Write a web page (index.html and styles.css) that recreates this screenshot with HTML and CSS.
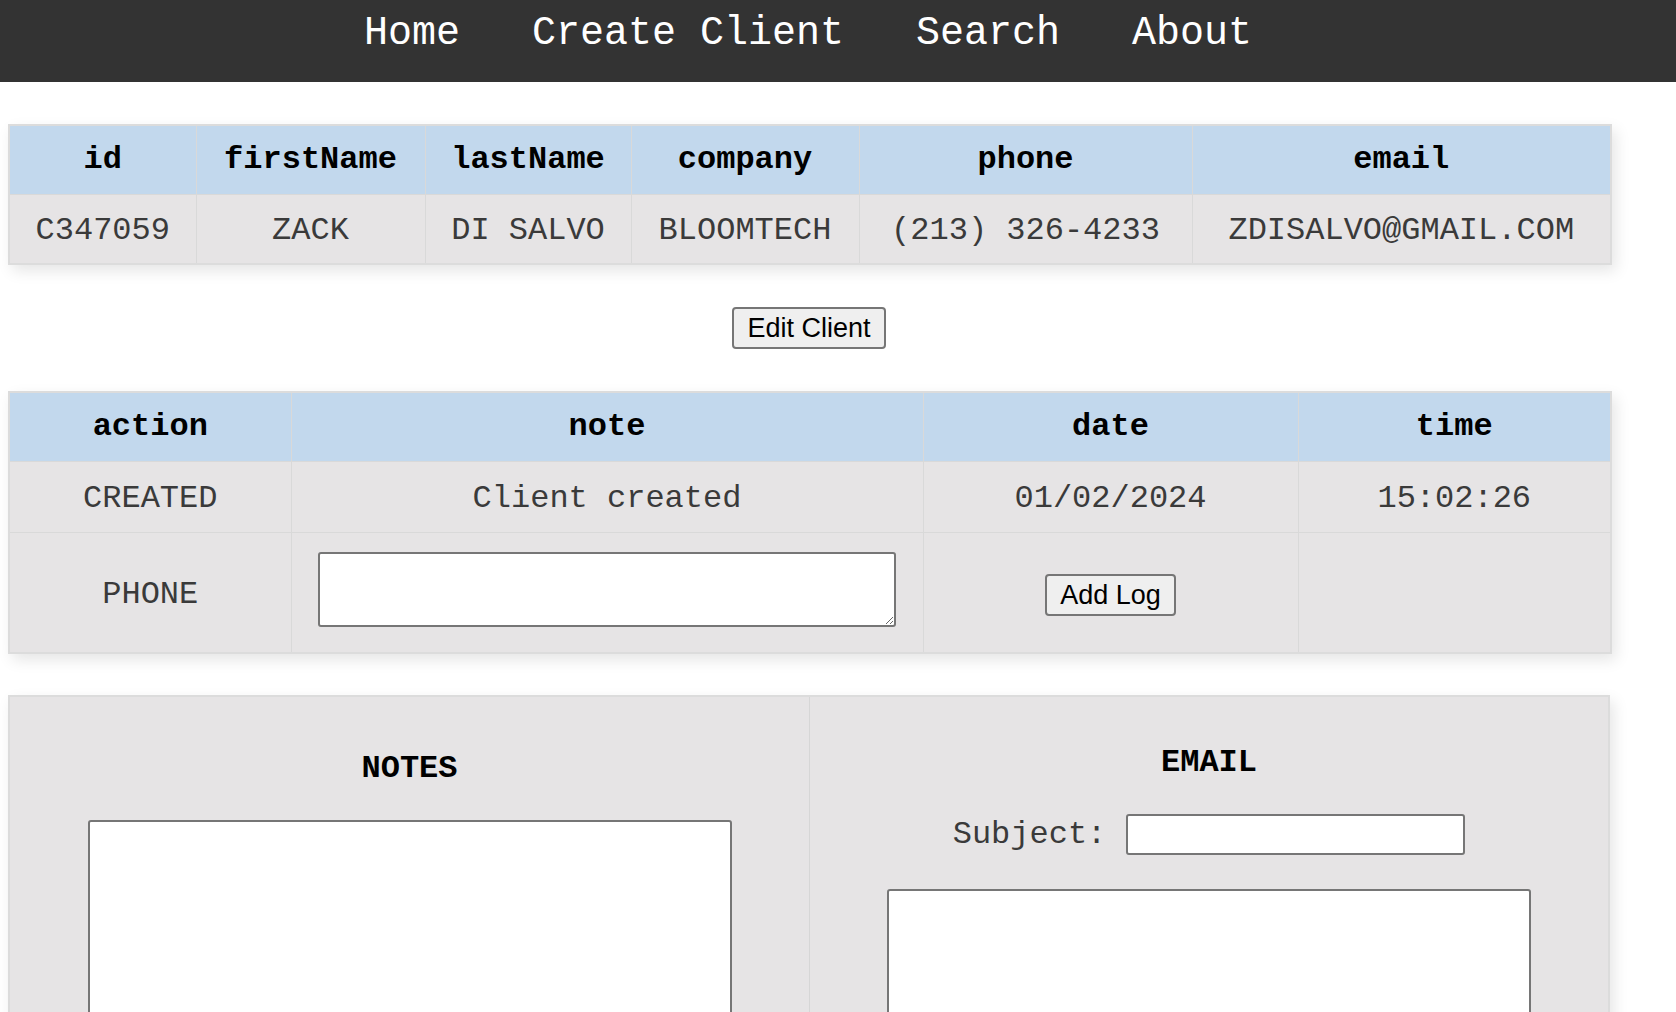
FILE: index.html
```html
<!DOCTYPE html>
<html lang="en">
<head>
<meta charset="utf-8">
<title>Client</title>
<link rel="stylesheet" href="styles.css">
</head>
<body>
<nav class="topnav">
  <a href="#">Home</a>
  <a href="#">Create Client</a>
  <a href="#">Search</a>
  <a href="#">About</a>
</nav>
<main class="content">
  <table class="grid">
    <colgroup>
      <col class="c-id"><col class="c-first"><col class="c-last"><col class="c-company"><col class="c-phone"><col class="c-email">
    </colgroup>
    <thead>
      <tr><th>id</th><th>firstName</th><th>lastName</th><th>company</th><th>phone</th><th>email</th></tr>
    </thead>
    <tbody>
      <tr><td>C347059</td><td>ZACK</td><td>DI SALVO</td><td>BLOOMTECH</td><td>(213) 326-4233</td><td>ZDISALVO@GMAIL.COM</td></tr>
    </tbody>
  </table>

  <div class="actions"><button class="btn" type="button">Edit Client</button></div>

  <table class="grid log-table">
    <colgroup>
      <col class="c-action"><col class="c-note"><col class="c-date"><col class="c-time">
    </colgroup>
    <thead>
      <tr><th>action</th><th>note</th><th>date</th><th>time</th></tr>
    </thead>
    <tbody>
      <tr><td>CREATED</td><td>Client created</td><td>01/02/2024</td><td>15:02:26</td></tr>
      <tr><td>PHONE</td><td><textarea class="log-note"></textarea></td><td><button class="btn" type="button">Add Log</button></td><td></td></tr>
    </tbody>
  </table>

  <section class="panel">
    <div class="panel-col notes">
      <h2 class="panel-title">NOTES</h2>
      <textarea class="big-area"></textarea>
    </div>
    <div class="panel-col email">
      <h2 class="panel-title">EMAIL</h2>
      <div class="subject-row">
        <label class="subject-label" for="subject">Subject:</label>
        <input class="subject-input" id="subject" type="text">
      </div>
      <textarea class="big-area"></textarea>
    </div>
  </section>
</main>
</body>
</html>
```

FILE: styles.css
```css
body {
  margin: 0;
  font-family: "Liberation Mono", "Courier New", monospace;
  background: #ffffff;
  color: #3a3a3a;
}

.topnav {
  height: 82px;
  box-sizing: border-box;
  background: #333333;
  display: flex;
  justify-content: center;
  align-items: flex-start;
  gap: 72px;
  padding: 11px 60px 0 0;
}

.topnav a {
  color: #ffffff;
  text-decoration: none;
  font-size: 40px;
  line-height: normal;
}

.content {
  width: 1602px;
  margin: 42px 8px 0;
  padding-bottom: 40px;
}

.grid {
  width: 1602px;
  border-collapse: collapse;
  table-layout: fixed;
  border: 2px solid #dcdcdc;
  box-shadow: 4px 6px 14px rgba(0, 0, 0, 0.1);
  font-size: 32px;
  text-align: center;
}

.grid th,
.grid td {
  border: 1px solid #d9d9d9;
  padding: 16px;
  line-height: 36px;
  vertical-align: middle;
}

.grid td {
  padding-top: 18px;
  padding-bottom: 14px;
}

.log-table td {
  padding-top: 19px;
  padding-bottom: 15px;
}

.grid th {
  background: #c2d8ed;
  color: #000000;
  font-weight: bold;
}

.grid td {
  background: #e6e4e5;
  color: #3a3a3a;
}

.c-id { width: 187px; }
.c-first { width: 229px; }
.c-last { width: 206px; }
.c-company { width: 228px; }
.c-phone { width: 333px; }
.c-email { width: 419px; }

.c-action { width: 282px; }
.c-note { width: 632px; }
.c-date { width: 375px; }
.c-time { width: 313px; }

.actions {
  display: flex;
  justify-content: center;
  margin: 42px 0;
}

.btn {
  box-sizing: border-box;
  height: 42px;
  font-family: "Liberation Sans", Arial, sans-serif;
  font-size: 27px;
  line-height: 30px;
  padding: 4px 13px;
  background: #efefef;
  color: #000000;
  border: 2px solid #767676;
  border-radius: 4px;
}

.log-note {
  display: block;
  box-sizing: border-box;
  width: 578px;
  height: 75px;
  margin: 0 auto 10px;
  border: 2px solid #767676;
  border-radius: 3px;
  background: #ffffff;
}

.panel {
  margin-top: 41px;
  display: grid;
  grid-template-columns: 1fr 1fr;
  background: #e6e4e5;
  border: 2px solid #dcdcdc;
  box-shadow: 4px 6px 14px rgba(0, 0, 0, 0.1);
}

.panel-col {
  text-align: center;
  padding: 48px 16px 40px;
}

.panel-col.notes {
  padding-top: 54px;
}

.panel-col + .panel-col {
  border-left: 1px solid #d6d6d6;
}

.panel-title {
  margin: 0 0 33px;
  font-size: 32px;
  line-height: 36px;
  font-weight: bold;
  color: #000000;
}

.big-area {
  display: block;
  box-sizing: border-box;
  width: 644px;
  height: 300px;
  margin: 0 auto;
  border: 2px solid #767676;
  border-radius: 3px;
  background: #ffffff;
}

.subject-row {
  display: flex;
  justify-content: center;
  align-items: center;
  gap: 20px;
  margin-bottom: 34px;
}

.subject-label {
  font-size: 32px;
  line-height: 36px;
  color: #3a3a3a;
}

.subject-input {
  box-sizing: border-box;
  width: 339px;
  height: 41px;
  border: 2px solid #767676;
  border-radius: 3px;
  background: #ffffff;
}
```
